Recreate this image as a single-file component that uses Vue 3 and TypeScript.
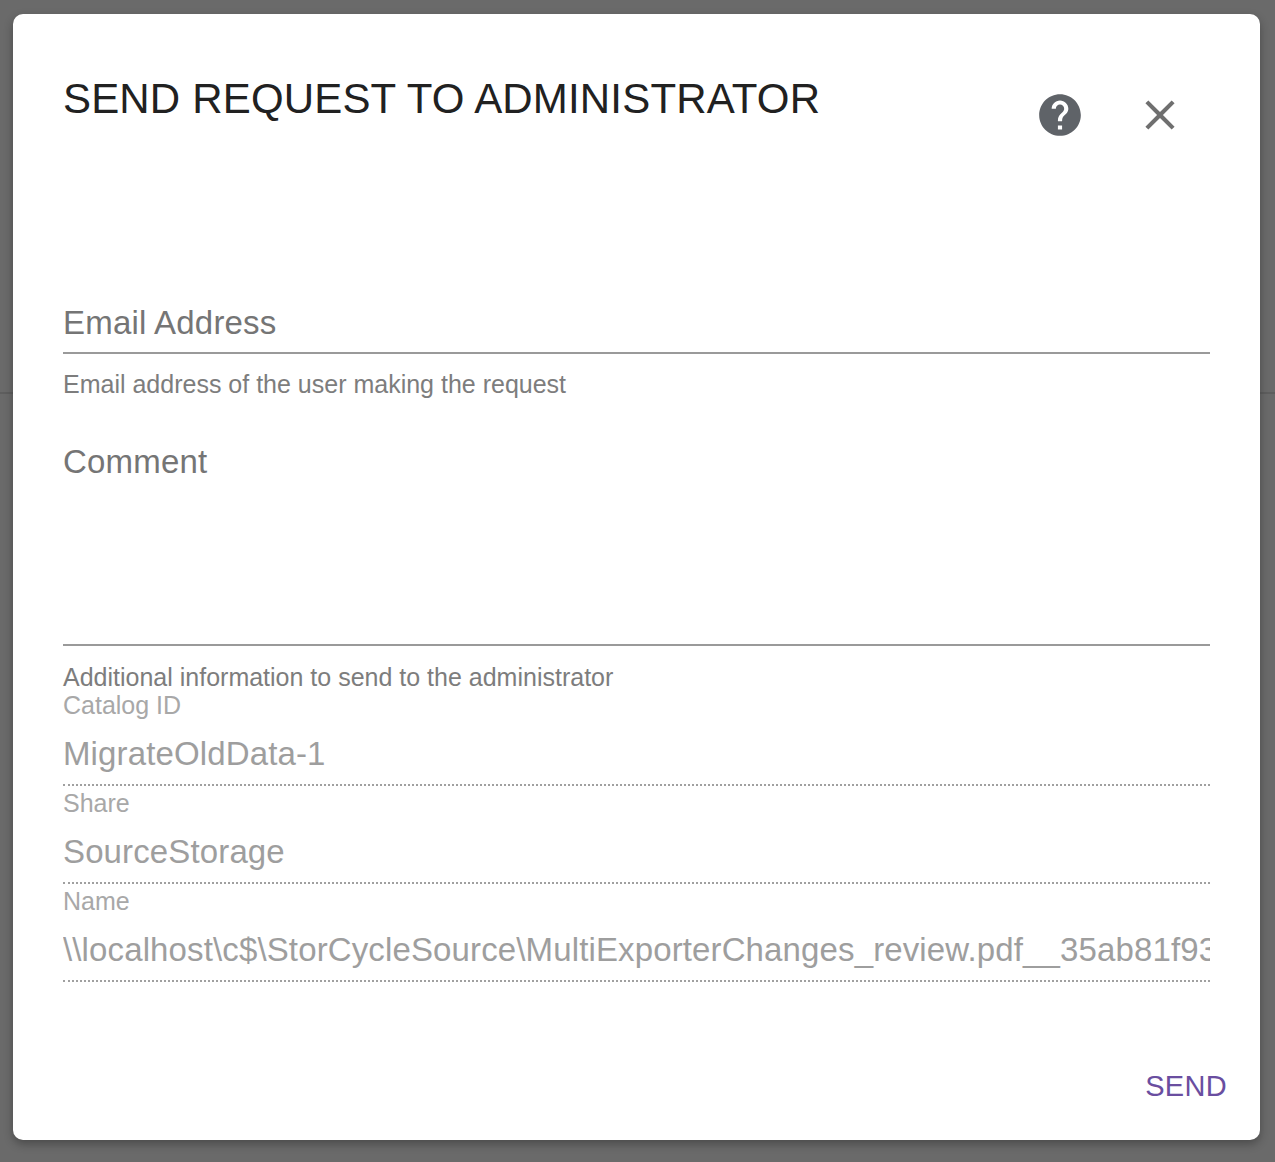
<script setup lang="ts">
const readonlyFields = [
  { label: 'Catalog ID', value: 'MigrateOldData-1' },
  { label: 'Share', value: 'SourceStorage' },
  { label: 'Name', value: '\\\\localhost\\c$\\StorCycleSource\\MultiExporterChanges_review.pdf__35ab81f93c1d7e' },
]
</script>

<template>
  <div class="backdrop">
    <div class="back-line"></div>
    <div class="dialog">
      <header class="head">
        <h1 class="title">SEND REQUEST TO ADMINISTRATOR</h1>
        <div class="actions">
          <svg class="help" viewBox="0 0 24 24" width="50" height="50">
            <path fill="#5f6368" d="M12 2C6.48 2 2 6.48 2 12s4.48 10 10 10 10-4.48 10-10S17.52 2 12 2zm1 17h-2v-2h2v2zm2.07-7.75l-.9.92C13.45 12.9 13 13.5 13 15h-2v-.5c0-1.1.45-2.1 1.17-2.83l1.24-1.26c.37-.36.59-.86.59-1.41 0-1.1-.9-2-2-2s-2 .9-2 2H8c0-2.21 1.79-4 4-4s4 1.79 4 4c0 .88-.36 1.68-.93 2.25z" />
          </svg>
          <svg class="close" viewBox="0 0 24 24" width="50" height="50">
            <path fill="#6f6f6f" d="M19 6.41L17.59 5 12 10.59 6.41 5 5 6.41 10.59 12 5 17.59 6.41 19 12 13.41 17.59 19 19 17.59 13.41 12z" />
          </svg>
        </div>
      </header>

      <div class="field email">
        <div class="placeholder">Email Address</div>
        <div class="rule"></div>
        <div class="hint">Email address of the user making the request</div>
      </div>

      <div class="field comment">
        <div class="placeholder comment-text">Comment</div>
        <div class="rule"></div>
        <div class="hint">Additional information to send to the administrator</div>
      </div>

      <div v-for="f in readonlyFields" :key="f.label" class="ro">
        <div class="ro-label">{{ f.label }}</div>
        <div class="ro-value">{{ f.value }}</div>
      </div>

      <footer class="foot">
        <span class="send">SEND</span>
      </footer>
    </div>
  </div>
</template>

<style scoped>
.backdrop {
  position: relative;
  box-sizing: border-box;
  width: 1275px;
  height: 1162px;
  padding: 14px 15px 22px 13px;
  background: #6a6a6a;
  font-family: 'Liberation Sans', Arial, sans-serif;
  overflow: hidden;
}
.back-line {
  position: absolute;
  left: 0;
  right: 0;
  top: 392px;
  height: 2px;
  background: #5e5e5e;
}
.dialog {
  position: relative;
  box-sizing: border-box;
  height: 1126px;
  padding: 0 50px;
  background: #fff;
  border-radius: 10px;
  box-shadow: 0 4px 10px rgba(0, 0, 0, 0.3);
}
.head {
  display: flex;
  justify-content: space-between;
  height: 279px;
}
.title {
  margin: 61px 0 0;
  font-size: 42px;
  line-height: 48px;
  font-weight: 400;
  letter-spacing: 0.17px;
  color: #212121;
}
.actions {
  display: flex;
  gap: 50px;
  margin: 76px 0 0 0;
  height: 50px;
  transform: translateX(-25px);
}
.placeholder {
  font-size: 33px;
  line-height: 59px;
  letter-spacing: 0.2px;
  color: #757575;
}
.rule {
  height: 2px;
  background: #9a9a9a;
}
.hint {
  font-size: 25px;
  line-height: 28px;
  color: #7d7d7d;
}
.email .hint {
  margin-top: 16px;
}
.comment {
  margin-top: 34px;
}
.comment-text {
  height: 212px;
}
.comment .hint {
  margin-top: 17px;
}
.ro-label {
  font-size: 25px;
  line-height: 28px;
  color: #a8a8a8;
}
.ro-value {
  box-sizing: border-box;
  height: 67px;
  margin-bottom: 3px;
  padding-top: 15px;
  font-size: 33px;
  line-height: 40px;
  letter-spacing: 0.13px;
  color: #9e9e9e;
  white-space: nowrap;
  overflow: hidden;
  border-bottom: 2px dotted #a0a0a0;
}
.foot {
  display: flex;
  justify-content: flex-end;
  margin: 86px -17px 0 0;
}
.send {
  font-size: 29px;
  line-height: 36px;
  letter-spacing: 0.3px;
  color: #6a4ea0;
}
</style>
